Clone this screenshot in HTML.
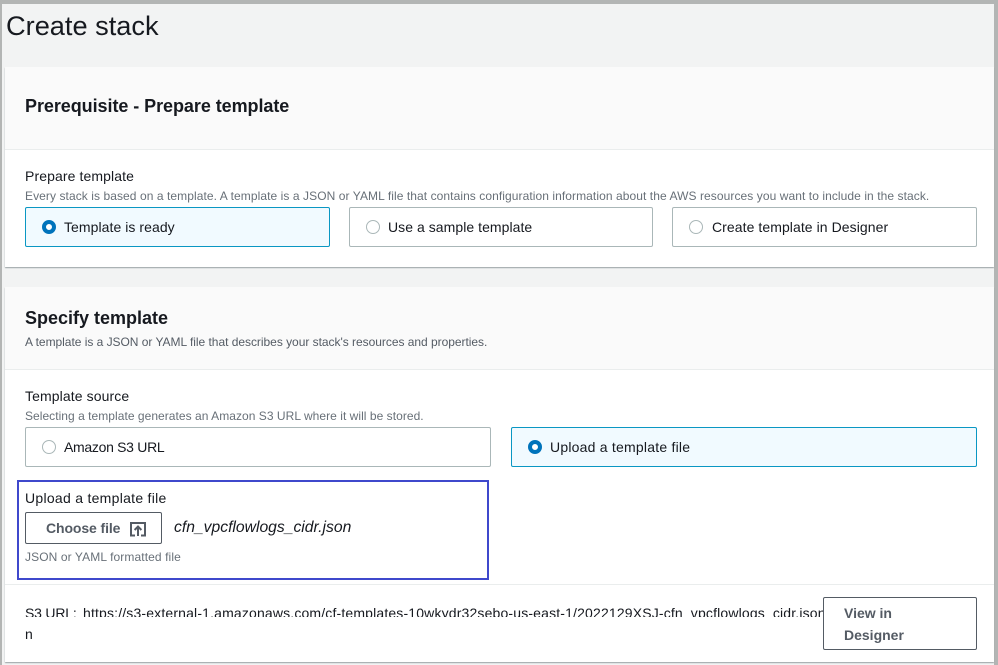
<!DOCTYPE html>
<html><head><meta charset="utf-8"><style>
html,body{margin:0;padding:0;}
body{width:998px;height:665px;position:relative;overflow:hidden;background:#f2f3f3;font-family:"Liberation Sans",sans-serif;color:#16191f;}
div{position:absolute;box-sizing:border-box;}
.t{white-space:nowrap;font-size:14px;line-height:20px;}
.s{white-space:nowrap;font-size:12px;line-height:16px;color:#687078;}
.b{font-weight:700;}
.card{left:5px;width:989px;background:#fff;box-shadow:0 1px 1px #9aa3a5;}
.head{left:5px;width:989px;background:#fafafa;border-bottom:1px solid #eaeded;}
.opt{background:#fff;border:1px solid #aab7b8;border-radius:2px;height:40px;}
.on{background:#f1faff;border:1px solid #0a97c3;}
.r{width:14px;height:14px;border-radius:50%;border:1px solid #aab7b8;background:#fff;}
.ro{width:14px;height:14px;border-radius:50%;border:4px solid #0073bb;background:#fff;}
</style></head><body>
<div style="left:0;top:0;width:998px;height:4px;background:#b3b5b4"></div>
<div style="left:0;top:0;width:2px;height:665px;background:#b3b5b4"></div>
<div style="left:994px;top:0;width:4px;height:665px;background:#b3b5b4"></div>

<div class="t" style="left:6px;top:8px;font-size:27.2px;line-height:36px">Create stack</div>

<div class="card" style="top:67px;height:200px"></div>
<div class="head" style="top:67px;height:83px"></div>
<div class="t b" style="left:25px;top:95px;font-size:18px;line-height:22px;letter-spacing:-.06px">Prerequisite - Prepare template</div>
<div class="t" style="left:25px;top:166px;letter-spacing:.1px">Prepare template</div>
<div class="s" style="left:25px;top:188px;letter-spacing:.075px">Every stack is based on a template. A template is a JSON or YAML file that contains configuration information about the AWS resources you want to include in the stack.</div>

<div class="opt on" style="left:25px;top:207px;width:305px"></div>
<div class="ro" style="left:42px;top:220px"></div>
<div class="t" style="left:64px;top:217px;letter-spacing:.06px">Template is ready</div>
<div class="opt" style="left:349px;top:207px;width:304px"></div>
<div class="r" style="left:366px;top:220px"></div>
<div class="t" style="left:388px;top:217px;letter-spacing:.05px">Use a sample template</div>
<div class="opt" style="left:672px;top:207px;width:305px"></div>
<div class="r" style="left:689px;top:220px"></div>
<div class="t" style="left:712px;top:217px;letter-spacing:.07px">Create template in Designer</div>

<div class="card" style="top:287px;height:375px"></div>
<div class="head" style="top:287px;height:83px"></div>
<div class="t b" style="left:25px;top:307px;font-size:18px;line-height:22px">Specify template</div>
<div class="s" style="left:25px;top:334px;color:#545b64;letter-spacing:-.03px">A template is a JSON or YAML file that describes your stack's resources and properties.</div>
<div class="t" style="left:25px;top:386px;letter-spacing:.1px">Template source</div>
<div class="s" style="left:25px;top:408px;letter-spacing:.04px">Selecting a template generates an Amazon S3 URL where it will be stored.</div>

<div class="opt" style="left:25px;top:427px;width:466px"></div>
<div class="r" style="left:42px;top:440px"></div>
<div class="t" style="left:64px;top:437px;letter-spacing:-.3px">Amazon S3 URL</div>
<div class="opt on" style="left:511px;top:427px;width:466px"></div>
<div class="ro" style="left:528px;top:440px"></div>
<div class="t" style="left:550px;top:437px;letter-spacing:.22px">Upload a template file</div>

<div style="left:17px;top:480px;width:472px;height:100px;border:2px solid #3f48cc"></div>
<div class="t" style="left:25px;top:488px;letter-spacing:.28px">Upload a template file</div>
<div style="left:25px;top:512px;width:137px;height:32px;border:1px solid #545b64;border-radius:2px;background:#fff"></div>
<div class="t b" style="left:46px;top:518px;color:#545b64;letter-spacing:-.1px">Choose file</div>
<svg style="position:absolute;left:130px;top:521px" width="16" height="16" viewBox="0 0 16 16" fill="none" stroke="#545b64" stroke-width="2"><path d="M5 14.500H1V2h14v12.500h-4"/><path d="M8 15V6M4.600 9L8 5.600 11.400 9"/></svg>
<div class="t" style="left:174px;top:518px;font-style:italic;font-size:15.7px">cfn_vpcflowlogs_cidr.json</div>
<div class="s" style="left:25px;top:549px;letter-spacing:.1px">JSON or YAML formatted file</div>

<div style="left:5px;top:584px;width:989px;height:1px;background:#eaeded"></div>
<div class="t" style="left:25px;top:603px;height:14px;overflow:hidden;letter-spacing:-.2px">S3 URL:</div>
<div class="t" style="left:83px;top:603px;width:740px;height:14px;overflow:hidden;letter-spacing:.16px">https://s3-external-1.amazonaws.com/cf-templates-10wkydr32sebo-us-east-1/2022129XSJ-cfn_vpcflowlogs_cidr.json</div>
<div class="t" style="left:25px;top:624px">n</div>
<div style="left:823px;top:597px;width:154px;height:53px;border:1px solid #545b64;border-radius:2px;background:#fff"></div>
<div class="t b" style="left:844px;top:602px;line-height:22px;color:#545b64">View in</div>
<div class="t b" style="left:844px;top:624px;line-height:22px;color:#545b64">Designer</div>
</body></html>
